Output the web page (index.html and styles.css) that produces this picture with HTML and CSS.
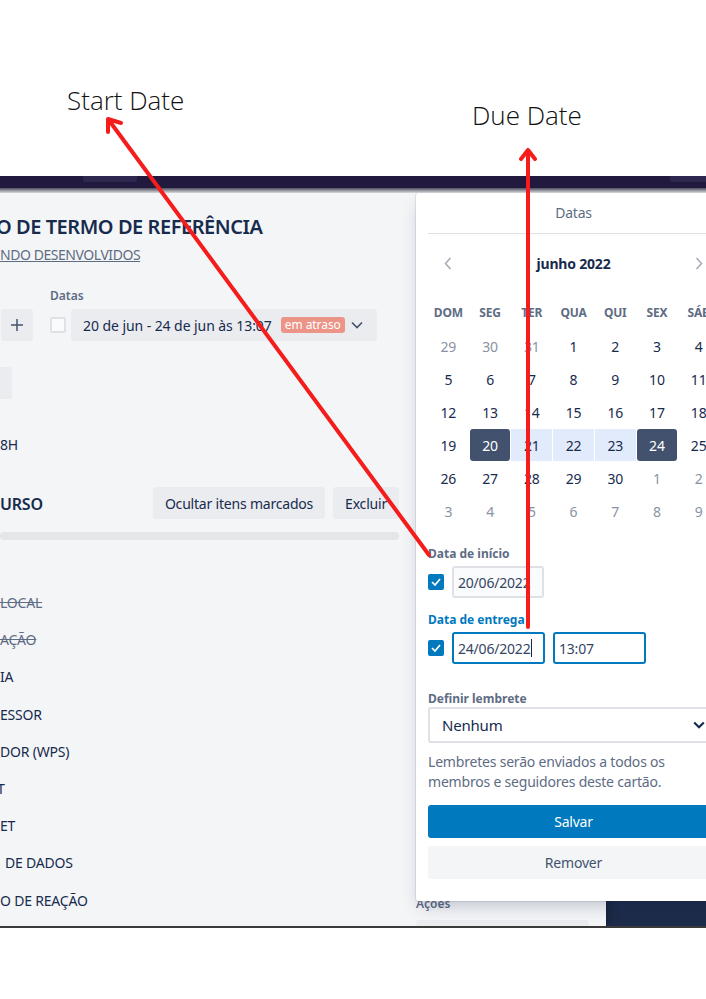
FILE: index.html
```html
<!DOCTYPE html>
<html lang="pt-BR">
<head>
    <meta charset="UTF-8">
    <meta name="viewport" content="width=device-width, initial-scale=1.0">
    <title>Datas - Start Date / Due Date</title>
    <link rel="stylesheet" href="styles.css">
</head>
<body>
<div class="page">
    <div class="notes">
        <span class="note note-start">Start Date</span>
        <span class="note note-due">Due Date</span>
    </div>

    <div class="screen">
        <div class="topbar">
            <span class="tab tab-left"></span>
            <span class="tab tab-right"></span>
        </div>
        <div class="topbar-shade"></div>

        <div class="board">
            <div class="card">
                <div class="card-main">
                    <h1 class="card-title">O DE TERMO DE REFERÊNCIA</h1>
                    <a class="card-list">NDO DESENVOLVIDOS</a>

                    <div class="meta">
                        <button class="btn-add">
                            <svg width="14" height="14" viewBox="0 0 14 14"><path d="M7 1v12M1 7h12" stroke="#42526e" stroke-width="1.5" fill="none"/></svg>
                        </button>
                        <div class="meta-dates">
                            <div class="meta-label">Datas</div>
                            <div class="dates-row">
                                <span class="check-empty"></span>
                                <button class="date-btn">
                                    <span>20 de jun - 24 de jun às 13:07</span>
                                    <span class="badge">em atraso</span>
                                    <svg class="date-chevron" width="12" height="8" viewBox="0 0 12 8"><path d="M1 1.5l5 5 5-5" stroke="#42526e" stroke-width="1.6" fill="none"/></svg>
                                </button>
                            </div>
                        </div>
                    </div>

                    <div class="btn-stub"></div>

                    <p class="card-text">8H</p>

                    <div class="checklist-head">
                        <h2 class="checklist-title">URSO</h2>
                        <button class="btn-gray">Ocultar itens marcados</button>
                        <button class="btn-gray">Excluir</button>
                    </div>
                    <div class="progress"></div>

                    <ul class="checklist">
                        <li class="done">LOCAL</li>
                        <li class="done">AÇÃO</li>
                        <li>IA</li>
                        <li>ESSOR</li>
                        <li>DOR (WPS)</li>
                        <li class="cut">T</li>
                        <li>ET</li>
                        <li class="gap">DE DADOS</li>
                        <li>O DE REAÇÃO</li>
                    </ul>
                </div>

                <div class="card-side">
                    <div class="side-label">Ações</div>
                    <div class="side-btn"></div>
                </div>
            </div>

            <div class="popover">
                <div class="pop-head">Datas</div>

                <div class="cal-nav">
                    <span class="nav-btn">
                        <svg width="8" height="13" viewBox="0 0 8 13"><path d="M6.5 1l-5 5.5 5 5.5" stroke="#a5adba" stroke-width="1.6" fill="none"/></svg>
                    </span>
                    <span class="cal-month">junho 2022</span>
                    <span class="nav-btn">
                        <svg width="8" height="13" viewBox="0 0 8 13"><path d="M1.5 1l5 5.5-5 5.5" stroke="#a5adba" stroke-width="1.6" fill="none"/></svg>
                    </span>
                </div>

                <div class="cal-week">
                    <span>DOM</span><span>SEG</span><span>TER</span><span>QUA</span><span>QUI</span><span>SEX</span><span>SÁB</span>
                </div>
                <div class="cal-days">
                    <span class="out">29</span><span class="out">30</span><span class="out">31</span><span>1</span><span>2</span><span>3</span><span>4</span>
                    <span>5</span><span>6</span><span>7</span><span>8</span><span>9</span><span>10</span><span>11</span>
                    <span>12</span><span>13</span><span>14</span><span>15</span><span>16</span><span>17</span><span>18</span>
                    <span>19</span><span class="sel">20</span><span class="range">21</span><span class="range">22</span><span class="range">23</span><span class="sel">24</span><span>25</span>
                    <span>26</span><span>27</span><span>28</span><span>29</span><span>30</span><span class="out">1</span><span class="out">2</span>
                    <span class="out">3</span><span class="out">4</span><span class="out">5</span><span class="out">6</span><span class="out">7</span><span class="out">8</span><span class="out">9</span>
                </div>

                <div class="field-label">Data de início</div>
                <div class="date-fields">
                    <span class="check-on">
                        <svg width="10" height="8" viewBox="0 0 10 8"><path d="M1 4l3 3 5-6" stroke="#fff" stroke-width="1.7" fill="none"/></svg>
                    </span>
                    <div class="field">20/06/2022</div>
                </div>

                <div class="field-label field-label-active">Data de entrega</div>
                <div class="date-fields">
                    <span class="check-on">
                        <svg width="10" height="8" viewBox="0 0 10 8"><path d="M1 4l3 3 5-6" stroke="#fff" stroke-width="1.7" fill="none"/></svg>
                    </span>
                    <div class="field field-focus">24/06/2022<span class="caret"></span></div>
                    <div class="field field-focus">13:07</div>
                </div>

                <div class="field-label reminder-label">Definir lembrete</div>
                <div class="select">
                    <span>Nenhum</span>
                    <svg width="12" height="8" viewBox="0 0 12 8"><path d="M1.2 1.5l4.8 4.8 4.8-4.8" stroke="#172b4d" stroke-width="2.2" fill="none"/></svg>
                </div>
                <p class="help">Lembretes serão enviados a todos os membros e seguidores deste cartão.</p>

                <button class="btn-save">Salvar</button>
                <button class="btn-remove">Remover</button>
            </div>
        </div>
    </div>

    <svg class="arrows" width="706" height="999" viewBox="0 0 706 999">
        <g fill="none" stroke="#f51c1c" stroke-width="4" stroke-linecap="round" stroke-linejoin="round">
            <path d="M429 555L108 119M108 132L108 119L121 123"/>
            <path d="M528 627L528 150M521 159L528 150L535 159"/>
        </g>
    </svg>
</div>
</body>
</html>
```

FILE: styles.css
```css
* {
    box-sizing: border-box;
}
body {
    margin: 0;
    background: #fff;
    font-family: "Noto Sans", "Open Sans", sans-serif;
    color: #172b4d;
}
button {
    font-family: inherit;
    border: none;
    cursor: pointer;
}
.page {
    position: relative;
    width: 706px;
    height: 999px;
    overflow: hidden;
    background: #fff;
}

/* annotations above the screenshot */
.notes {
    display: grid;
    grid-template-columns: 472px 1fr;
    height: 176px;
}
.note {
    font-family: "Open Sans", sans-serif;
    font-weight: 300;
    font-size: 26px;
    line-height: 30px;
    color: #111;
    white-space: nowrap;
}
.note-start {
    padding: 85px 0 0 67px;
}
.note-due {
    padding-top: 100px;
}

/* screenshot frame */
.screen {
    display: flex;
    flex-direction: column;
    height: 752px;
    border-bottom: 2px solid #3a3a3a;
}
.topbar {
    display: flex;
    height: 12px;
    background: #221a3e;
}
.tab {
    height: 6px;
    background: #2e2850;
    border-radius: 0 0 3px 3px;
}
.tab-left {
    width: 54px;
    margin-left: 83px;
}
.tab-right {
    width: 40px;
    margin-left: auto;
    margin-right: -4px;
}
.topbar-shade {
    height: 5px;
    background: linear-gradient(#4f4d5e, #d9dadf);
}
.board {
    position: relative;
    flex: 1;
    background: #1e2c4b;
    overflow: hidden;
}

/* card modal */
.card {
    display: flex;
    width: 606px;
    height: 100%;
    background: #f4f5f7;
    box-shadow: 2px 0 10px rgba(0, 0, 0, 0.3);
}
.card-main {
    flex: none;
    width: 399px;
    font-size: 14px;
    letter-spacing: -0.2px;
}
.card-title {
    margin: 22px 0 0 -4px;
    font-size: 20px;
    line-height: 24px;
    font-weight: 600;
    letter-spacing: -0.45px;
    white-space: nowrap;
}
.card-list {
    display: block;
    margin-top: 6px;
    line-height: 20px;
    color: #5e6c84;
    text-decoration: underline;
    letter-spacing: -0.45px;
}
.meta {
    display: flex;
    align-items: flex-end;
    margin-top: 23px;
}
.btn-add {
    display: flex;
    align-items: center;
    justify-content: center;
    width: 32px;
    height: 32px;
    margin-left: 1px;
    border-radius: 3px;
    background: #ebecf0;
}
.meta-dates {
    margin-left: 17px;
}
.meta-label {
    margin-bottom: 5px;
    font-size: 12px;
    line-height: 16px;
    font-weight: 600;
    letter-spacing: 0;
    color: #5e6c84;
}
.dates-row {
    display: flex;
    align-items: center;
    gap: 5px;
}
.check-empty {
    width: 16px;
    height: 16px;
    border: 2px solid #dfe1e6;
    border-radius: 2px;
    background: #fafbfc;
}
.date-btn {
    display: flex;
    align-items: center;
    height: 32px;
    padding: 0 14px 0 12px;
    border-radius: 3px;
    background: #ebecf0;
    font-size: 14px;
    letter-spacing: -0.07px;
    color: #172b4d;
}
.badge {
    margin-left: 9px;
    padding: 0 4px;
    border-radius: 3px;
    background: #ec9488;
    color: #fff;
    font-size: 12px;
    line-height: 16px;
}
.date-chevron {
    margin-left: 6px;
}
.btn-stub {
    width: 12px;
    height: 32px;
    margin-top: 26px;
    border-radius: 0 3px 3px 0;
    background: #ebecf0;
}
.card-text {
    margin: 36px 0 0;
    line-height: 20px;
}
.checklist-head {
    display: flex;
    align-items: center;
    gap: 8px;
    height: 32px;
    margin-top: 32px;
}
.checklist-title {
    flex: 1;
    margin: 0;
    padding-top: 2px;
    font-size: 16px;
    font-weight: 600;
}
.btn-gray {
    height: 32px;
    padding: 0 12px;
    border-radius: 3px;
    background: #ebecf0;
    font-size: 14px;
    letter-spacing: -0.2px;
    color: #172b4d;
}
.progress {
    height: 8px;
    margin-top: 13px;
    border-radius: 4px;
    background: #e4e6ea;
}
.checklist {
    margin: 53px 0 0;
    padding: 0;
    list-style: none;
}
.checklist li {
    height: 37.2px;
    line-height: 20px;
    white-space: nowrap;
}
.checklist .done {
    color: #5e6c84;
    text-decoration: line-through;
}
.checklist .cut {
    margin-left: -3px;
}
.checklist .gap {
    padding-left: 5px;
}
.card-side {
    width: 173px;
    margin-left: 17px;
    padding-top: 703px;
}
.side-label {
    font-size: 12px;
    line-height: 16px;
    font-weight: 600;
    color: #5e6c84;
}
.side-btn {
    height: 32px;
    margin-top: 8px;
    border-radius: 3px;
    background: #ebecf0;
}

/* dates popover */
.popover {
    position: absolute;
    top: 0;
    left: 416px;
    width: 315px;
    padding: 0 12px 22px;
    border-radius: 3px;
    background: #fff;
    box-shadow: 0 8px 16px -4px rgba(9, 30, 66, 0.25), 0 0 0 1px rgba(9, 30, 66, 0.08);
    font-size: 14px;
    letter-spacing: -0.2px;
}
.pop-head {
    height: 41px;
    line-height: 40px;
    border-bottom: 1px solid #dfe1e6;
    text-align: center;
    color: #5e6c84;
}
.cal-nav {
    display: flex;
    align-items: center;
    justify-content: space-between;
    height: 32px;
    margin-top: 13px;
}
.nav-btn {
    display: flex;
    align-items: center;
    justify-content: center;
    width: 40px;
    height: 32px;
}
.cal-month {
    font-weight: 700;
}
.cal-week,
.cal-days {
    display: grid;
    grid-template-columns: repeat(7, 1fr);
    column-gap: 1px;
}
.cal-week {
    height: 34px;
    margin-top: 16px;
    align-items: center;
    text-align: center;
    font-size: 12px;
    font-weight: 700;
    color: #5e6c84;
}
.cal-days {
    grid-auto-rows: 32px;
    row-gap: 1px;
    margin-top: 1px;
}
.cal-days span {
    display: flex;
    align-items: center;
    justify-content: center;
    border-radius: 3px;
}
.cal-days .out {
    color: #8993a4;
}
.cal-days .sel {
    background: #42526e;
    color: #fff;
}
.cal-days .range {
    background: #e2ebfc;
    border-radius: 0;
}
.field-label {
    margin: 19px 0 4px;
    font-size: 12px;
    line-height: 16px;
    font-weight: 700;
    letter-spacing: 0;
    color: #5e6c84;
}
.field-label-active {
    margin-top: 14px;
    color: #0079bf;
}
.reminder-label {
    margin: 27px 0 0;
}
.date-fields {
    display: flex;
    align-items: center;
    gap: 8px;
    height: 32px;
}
.check-on {
    display: flex;
    align-items: center;
    justify-content: center;
    width: 16px;
    height: 16px;
    border-radius: 2px;
    background: #0079bf;
}
.field {
    display: flex;
    align-items: center;
    width: 92px;
    height: 32px;
    padding: 0 4px;
    border: 2px solid #dfe1e6;
    border-radius: 3px;
    background: #fafbfc;
    color: #344563;
}
.field-focus {
    width: 93px;
    border-color: #0079bf;
    background: #fff;
}
.caret {
    width: 1px;
    height: 18px;
    margin-left: 1px;
    background: #172b4d;
}
.select {
    display: flex;
    align-items: center;
    justify-content: space-between;
    height: 36px;
    padding: 0 12px;
    border: 2px solid #dfe1e6;
    border-radius: 3px;
    font-size: 15px;
}
.help {
    margin: 9px 0 0;
    line-height: 20px;
    color: #5e6c84;
}
.btn-save,
.btn-remove {
    display: block;
    width: 100%;
    height: 33px;
    border-radius: 3px;
    font-size: 14px;
    letter-spacing: -0.2px;
}
.btn-save {
    margin-top: 13px;
    background: #0079bf;
    color: #fff;
}
.btn-remove {
    margin-top: 8px;
    background: #f4f5f7;
    color: #42526e;
}

/* red annotation arrows */
.arrows {
    position: absolute;
    top: 0;
    left: 0;
    pointer-events: none;
}
```
